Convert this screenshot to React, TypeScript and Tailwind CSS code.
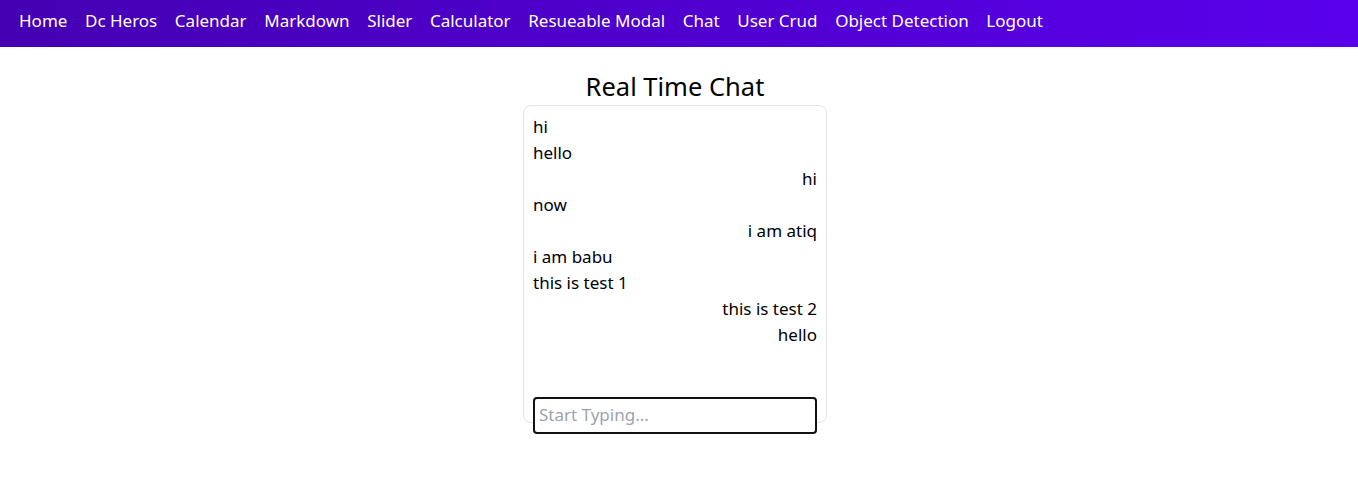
const links = [
  'Home',
  'Dc Heros',
  'Calendar',
  'Markdown',
  'Slider',
  'Calculator',
  'Resueable Modal',
  'Chat',
  'User Crud',
  'Object Detection',
  'Logout',
];

// mine = right aligned
const messages: { text: string; mine: boolean }[] = [
  { text: 'hi', mine: false },
  { text: 'hello', mine: false },
  { text: 'hi', mine: true },
  { text: 'now', mine: false },
  { text: 'i am atiq', mine: true },
  { text: 'i am babu', mine: false },
  { text: 'this is test 1', mine: false },
  { text: 'this is test 2', mine: true },
  { text: 'hello', mine: true },
];

function App() {
  return (
    <div className="min-h-screen bg-white text-black font-['Noto_Sans',sans-serif]">
      <nav className="h-[47px] flex items-center gap-[17.6px] px-[19px] bg-gradient-to-r from-[#4500b2] to-[#5a00ec]">
        {links.map((l) => (
          <a key={l} href="#" className="text-[17px] text-white leading-none pb-[7px]">
            {l}
          </a>
        ))}
      </nav>

      <main className="flex flex-col items-center pt-[23px] pr-[8px]">
        <h2 className="text-[25.5px] leading-[33px] mb-[2px]">Real Time Chat</h2>
        <div className="w-[304px] h-[318px] border border-[#e4e4e7] rounded-[8px] px-[9px] pt-[8px] pb-[10px] flex flex-col">
          <div className="h-[283px] shrink-0">
            {messages.map((m, i) => (
              <div
                key={i}
                className={`text-[17px] leading-[26px] ${m.mine ? 'text-right' : 'text-left'}`}
              >
                {m.text}
              </div>
            ))}
          </div>
          <input
            autoFocus
            type="text"
            placeholder="Start Typing..."
            className="shrink-0 h-[37px] w-full border-2 border-[#111] rounded-[4px] px-[4px] pb-[3px] text-[17px] outline-none placeholder:text-[#9ca3af] bg-white"
          />
        </div>
      </main>
    </div>
  );
}

export default App;
